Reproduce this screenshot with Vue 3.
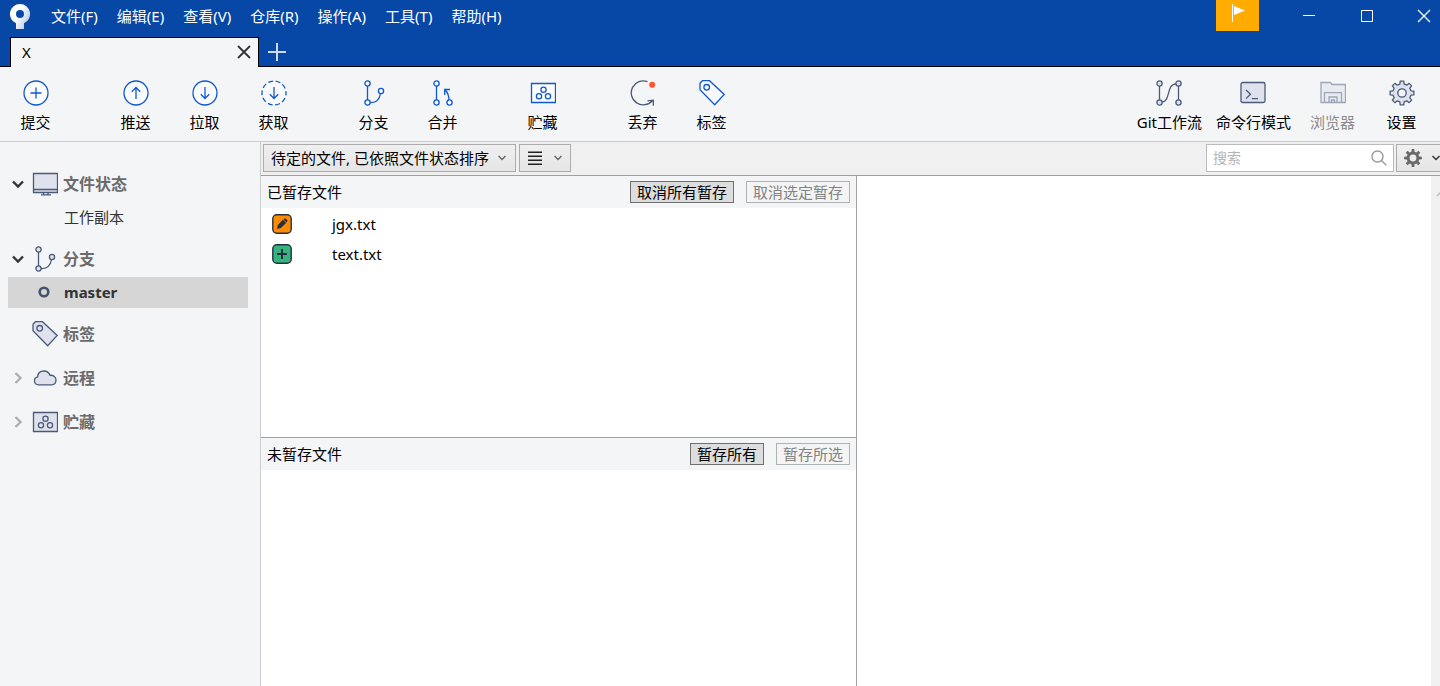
<script setup>
import { ref } from 'vue'

const menus = ['文件(F)', '编辑(E)', '查看(V)', '仓库(R)', '操作(A)', '工具(T)', '帮助(H)']

const actionGroups = [
  [{ icon: 'commit', label: '提交' }],
  [
    { icon: 'push', label: '推送' },
    { icon: 'pull', label: '拉取' },
    { icon: 'fetch', label: '获取' },
  ],
  [
    { icon: 'branch', label: '分支' },
    { icon: 'merge', label: '合并' },
  ],
  [{ icon: 'stash', label: '贮藏' }],
  [
    { icon: 'discard', label: '丢弃' },
    { icon: 'tag', label: '标签' },
  ],
]

const tools = [
  { icon: 'flow', label: 'Git工作流' },
  { icon: 'terminal', label: '命令行模式' },
  { icon: 'explorer', label: '浏览器', disabled: true },
  { icon: 'settings', label: '设置' },
]

const sections = [
  { icon: 'monitor', label: '文件状态', open: true, items: [{ label: '工作副本' }] },
  { icon: 'branch', label: '分支', open: true, items: [{ label: 'master', current: true }] },
  { icon: 'tag', label: '标签', leaf: true },
  { icon: 'cloud', label: '远程' },
  { icon: 'stash', label: '贮藏' },
]

const staged = [
  { name: 'jgx.txt', state: 'modified' },
  { name: 'text.txt', state: 'added' },
]

const query = ref('')

function gear(cx, cy, teeth, outer, inner) {
  const step = (Math.PI * 2) / teeth
  const at = (r, a) => `${(cx + r * Math.sin(a)).toFixed(2)} ${(cy - r * Math.cos(a)).toFixed(2)}`
  const points = []
  for (let i = 0; i < teeth; i++) {
    const a = i * step
    points.push(at(inner, a - step * 0.3), at(outer, a - step * 0.19), at(outer, a + step * 0.19), at(inner, a + step * 0.3))
  }
  return `M${points.join('L')}Z`
}
const gearLarge = gear(13, 13, 8, 12, 9.2)
const gearSmall = gear(9, 9, 8, 9, 6.4)
</script>

<template>
  <div class="app">
    <header class="titlebar">
      <div class="menubar">
        <svg class="logo" width="22" height="26" viewBox="0 0 22 26" aria-hidden="true">
          <defs>
            <linearGradient id="stem" x1="0" y1="0" x2="1" y2="0.6">
              <stop offset="0.5" stop-color="#fff" />
              <stop offset="1" stop-color="#b9cbe8" />
            </linearGradient>
          </defs>
          <path fill="url(#stem)" fill-rule="evenodd" d="M11 0a10 10 0 0 1 4 19.2V24.5a.6.6 0 0 1-.6.6H7.600a.6.600 0 0 1-.6-.6V19.200A10 10 0 0 1 11 0ZM11 6a4 4 0 1 0 0 8a4 4 0 0 0 0-8Z" />
        </svg>
        <nav class="menus">
          <button v-for="m in menus" :key="m" type="button">{{ m }}</button>
        </nav>
        <div class="window-controls">
          <button class="flag" type="button" aria-label="通知">
            <svg width="16" height="20" viewBox="0 0 16 20"><path d="M2.500 1v18" stroke="#fff" /><path d="M4 3l11 4.500L4 12z" fill="#fff" /></svg>
          </button>
          <button class="control" type="button" aria-label="最小化">
            <svg width="14" height="14" viewBox="0 0 14 14"><path d="M1 6.500h12" stroke="#fff" /></svg>
          </button>
          <button class="control" type="button" aria-label="最大化">
            <svg width="14" height="14" viewBox="0 0 14 14"><path d="M1.500 1.500h11v11h-11z" fill="none" stroke="#fff" /></svg>
          </button>
          <button class="control close" type="button" aria-label="关闭">
            <svg width="14" height="14" viewBox="0 0 14 14"><path d="M1 1l12 12M13 1L1 13" stroke="#fff" stroke-width="1.300" /></svg>
          </button>
        </div>
      </div>
      <div class="tabs">
        <div class="tab">
          <span>X</span>
          <button type="button" aria-label="关闭标签页">
            <svg width="14" height="14" viewBox="0 0 14 14"><path d="M1 1l12 12M13 1L1 13" stroke="#333" stroke-width="1.800" /></svg>
          </button>
        </div>
        <button class="add-tab" type="button" aria-label="新建标签页">
          <svg width="18" height="18" viewBox="0 0 18 18"><path d="M9 0v18M0 9h18" stroke="#cfdcf0" stroke-width="2" /></svg>
        </button>
      </div>
    </header>

    <svg class="symbols" aria-hidden="true">
      <symbol id="commit" viewBox="0 0 26 26"><circle class="fill" cx="13" cy="13" r="12" /><path d="M13 7.500v11M7.500 13h11" /></symbol>
      <symbol id="push" viewBox="0 0 26 26"><circle class="fill" cx="13" cy="13" r="12" /><path d="M13 19V7.500M8.800 11.700L13 7.500l4.200 4.200" /></symbol>
      <symbol id="pull" viewBox="0 0 26 26"><circle class="fill" cx="13" cy="13" r="12" /><path d="M13 7v11.500M8.800 14.300L13 18.500l4.200-4.200" /></symbol>
      <symbol id="fetch" viewBox="0 0 26 26"><circle class="fill" cx="13" cy="13" r="12" stroke-dasharray="5 2.540" stroke-dashoffset="2.500" /><path d="M13 7v11.500M8.800 14.300L13 18.500l4.200-4.200" /></symbol>
      <symbol id="branch" viewBox="0 0 26 26">
        <path d="M6.500 6v14M9 22.500c6 .5 9.500-3.500 10.500-9" />
        <circle class="fill" cx="6.500" cy="3.500" r="2.600" /><circle class="fill" cx="6.500" cy="22.500" r="2.600" /><circle class="fill" cx="20" cy="11" r="2.600" />
      </symbol>
      <symbol id="merge" viewBox="0 0 26 26">
        <path d="M6.500 6v14M19 20c0-4-1-7-4-10.500M14.700 15V9.500H20" />
        <circle class="fill" cx="6.500" cy="3.500" r="2.600" /><circle class="fill" cx="6.500" cy="22.500" r="2.600" /><circle class="fill" cx="19.500" cy="22.500" r="2.600" />
      </symbol>
      <symbol id="stash" viewBox="0 0 26 26">
        <path class="fill" d="M1.500 3.500h24v19h-24z" />
        <circle cx="13.500" cy="9.700" r="2.600" /><circle cx="9" cy="16.200" r="2.600" /><circle cx="18" cy="16.200" r="2.600" />
      </symbol>
      <symbol id="discard" viewBox="0 0 26 26">
        <path d="M17.500 1.600A12 12 0 1 0 22.500 20.500M17.500 20.800l5.800-.6v5.500" />
        <circle cx="22.200" cy="4.700" r="3" fill="#ff5630" stroke="none" />
      </symbol>
      <symbol id="tag" viewBox="0 0 26 26">
        <path class="fill" d="M1 3.200L3.500.7h7L25.200 14.500 15.700 24.800 1 9.800z" /><circle cx="7.700" cy="7.300" r="2.800" />
      </symbol>
      <symbol id="flow" viewBox="0 0 26 26">
        <path d="M3.500 6v14M22.500 6v14M6 22.200C15 21 10 4.500 20 3.800" />
        <circle class="fill" cx="3.500" cy="3.500" r="2.600" /><circle class="fill" cx="3.500" cy="22.500" r="2.600" />
        <circle class="fill" cx="22.500" cy="3.500" r="2.600" /><circle class="fill" cx="22.500" cy="22.500" r="2.600" />
      </symbol>
      <symbol id="terminal" viewBox="0 0 26 26">
        <rect class="fill" x="1" y="2.500" width="24" height="20" rx="1.800" /><path d="M6 10l4.500 4.300L6 18.600M11.800 18.600H18" />
      </symbol>
      <symbol id="explorer" viewBox="0 0 26 26">
        <path class="fill" d="M1 2.500h9.500L12 4.500h13.500v18H1z" /><path d="M4.500 22.500v-9.800h17v9.800M9 22.500V17h8v5.500M11.500 22v-2h3v2" />
      </symbol>
      <symbol id="settings" viewBox="0 0 26 26"><path class="fill" :d="gearLarge" stroke-linejoin="round" /><circle cx="13" cy="13" r="4.200" fill="#f4f5f7" /></symbol>
      <symbol id="monitor" viewBox="0 0 26 26">
        <path class="fill" d="M1.500 2.500h24v19h-24z" /><path d="M1.500 18.500h24M9 23.800h10M11.500 22v1.500M16 22v1.500" />
      </symbol>
      <symbol id="cloud" viewBox="0 0 26 26">
        <path class="fill" d="M6.500 19.800a4 4 0 0 1-.9-7.900c.2-3.700 2.900-5.900 6.400-5.900 3 0 5 1.500 6 4.300 3.500-.3 6 1.700 6 4.700 0 2.800-1.800 4.800-4.500 4.800z" />
      </symbol>
    </svg>

    <div class="toolbar">
      <div v-for="(group, i) in actionGroups" :key="i" class="group">
        <button v-for="a in group" :key="a.icon" type="button" class="tool">
          <svg class="icon" :class="a.icon === 'discard' ? 'slate' : 'blue'"><use :href="'#' + a.icon" /></svg>
          <span>{{ a.label }}</span>
        </button>
      </div>
      <div class="group right">
        <button v-for="t in tools" :key="t.icon" type="button" class="tool" :disabled="t.disabled">
          <svg class="icon slate"><use :href="'#' + t.icon" /></svg>
          <span>{{ t.label }}</span>
        </button>
      </div>
    </div>

    <div class="body">
      <aside class="sidebar">
        <section v-for="s in sections" :key="s.label">
          <button type="button" class="section-head">
            <svg class="caret" :class="{ open: s.open }" width="12" height="12" viewBox="0 0 12 12">
              <path v-if="!s.leaf" :d="s.open ? 'M1 3.500l5 5 5-5' : 'M3.500 1l5 5-5 5'" />
            </svg>
            <svg class="icon slate"><use :href="'#' + s.icon" /></svg>
            <span>{{ s.label }}</span>
          </button>
          <a v-for="item in s.items" :key="item.label" href="#" class="entry" :class="{ current: item.current }">
            <svg v-if="item.current" width="12" height="12" viewBox="0 0 12 12"><circle cx="6" cy="6" r="4.300" fill="none" stroke="#42526e" stroke-width="2.600" /></svg>
            <span>{{ item.label }}</span>
          </a>
        </section>
      </aside>

      <main class="main">
        <div class="filterbar">
          <div class="sort">
            <select aria-label="文件排序">
              <option>待定的文件, 已依照文件状态排序</option>
            </select>
            <svg class="chevron" width="8" height="6" viewBox="0 0 8 6"><path d="M.5 1L4 4.500 7.500 1" /></svg>
          </div>
          <button type="button" class="view" aria-label="列表视图">
            <svg width="14" height="14" viewBox="0 0 14 14"><path d="M0 1.300h14M0 5.300h14M0 9.300h14M0 13.300h14" stroke="#222" stroke-width="1.400" /></svg>
            <svg class="chevron" width="8" height="6" viewBox="0 0 8 6"><path d="M.5 1L4 4.500 7.500 1" /></svg>
          </button>
          <label class="search">
            <input v-model="query" type="text" placeholder="搜索" aria-label="搜索" />
            <svg width="16" height="16" viewBox="0 0 16 16"><circle cx="6.500" cy="6.500" r="5.500" /><path d="M10.500 10.500l4.800 4.800" /></svg>
          </label>
          <button type="button" class="options" aria-label="选项">
            <svg width="18" height="18" viewBox="0 0 18 18"><path :d="gearSmall" fill="#6a6a6a" /><circle cx="9" cy="9" r="3.400" fill="#ececec" /></svg>
            <svg class="chevron dark" width="8" height="6" viewBox="0 0 8 6"><path d="M.5 1L4 4.500 7.500 1" /></svg>
          </button>
        </div>

        <div class="panes">
          <div class="files">
            <section class="staged">
              <div class="pane-head">
                <h2>已暂存文件</h2>
                <button type="button">取消所有暂存</button>
                <button type="button" disabled>取消选定暂存</button>
              </div>
              <ul>
                <li v-for="f in staged" :key="f.name">
                  <svg width="20" height="20" viewBox="0 0 20 20">
                    <rect x=".8" y=".8" width="18.400" height="18.400" rx="4" :fill="f.state === 'added' ? '#36b37e' : '#ff8b00'" stroke="#253040" stroke-width="1.400" />
                    <path v-if="f.state === 'added'" d="M10 5v10M5 10h10" stroke="#253040" stroke-width="2" />
                    <g v-else fill="#253040"><path d="M5 15l.8-4.100 5.200-5.100 3.100 3.100-5.200 5.200z" /><path d="M11.500 5.400l.8-.7c1.200-1 3.900 1.600 2.900 2.800l-.8.900z" /></g>
                  </svg>
                  <span>{{ f.name }}</span>
                </li>
              </ul>
            </section>
            <section class="unstaged">
              <div class="pane-head">
                <h2>未暂存文件</h2>
                <button type="button">暂存所有</button>
                <button type="button" disabled>暂存所选</button>
              </div>
            </section>
          </div>
          <div class="diff">
            <div class="scroll"><svg width="9" height="8" viewBox="0 0 9 8"><path d="M6 6l4-4" fill="none" stroke="#bbb" stroke-width="1.500" /></svg></div>
          </div>
        </div>
      </main>
    </div>
  </div>
</template>

<style>
body {
  margin: 0;
  overflow: hidden;
}
</style>

<style scoped>
.app {
  display: flex;
  flex-direction: column;
  height: 100vh;
  background: #f4f5f7;
  color: #000;
  font: 15px/20px "Noto Sans", "Noto Sans CJK SC", sans-serif;
}
button {
  margin: 0;
  padding: 0;
  border: 0;
  background: none;
  color: inherit;
  font: inherit;
  white-space: nowrap;
}
svg {
  flex: none;
}
.symbols {
  position: absolute;
  width: 0;
  height: 0;
}

.titlebar {
  display: flex;
  flex-direction: column;
  flex: none;
  background: #0747a6;
  color: #fff;
}
.menubar {
  display: flex;
  align-items: flex-start;
  height: 37px;
}
.logo {
  margin: 4px 11px 0 9px;
}
.menus {
  display: flex;
  gap: 1px;
  height: 32px;
}
.menus button {
  padding: 0 9px;
}
.window-controls {
  display: flex;
  height: 32px;
  margin-left: auto;
}
.window-controls button {
  display: flex;
  align-items: center;
  justify-content: center;
}
.window-controls .flag {
  width: 43px;
  height: 31px;
  margin-right: 21px;
  padding-bottom: 5px;
  background: #ffab00;
}
.control {
  width: 58px;
}
.control.close {
  width: 32px;
  margin-left: 12px;
}
.tabs {
  display: flex;
  height: 30px;
  box-shadow: inset 0 -1px #000;
}
.tab {
  display: flex;
  align-items: center;
  justify-content: space-between;
  box-sizing: border-box;
  width: 249px;
  margin-left: 10px;
  padding: 0 7px 1px 11px;
  border: 1px solid #000;
  border-bottom: 0;
  background: #f4f5f7;
  color: #000;
}
.tab button,
.add-tab {
  display: flex;
  align-items: center;
}
.add-tab {
  margin-left: 9px;
}

.toolbar {
  display: flex;
  flex: none;
  gap: 31px;
  box-sizing: border-box;
  height: 75px;
  padding: 0 4px 0 1px;
  border-bottom: 1px solid #ccc;
}
.group {
  display: flex;
}
.group.right {
  margin-left: auto;
}
.tool {
  display: flex;
  flex-direction: column;
  align-items: center;
  gap: 6px;
  min-width: 69px;
  padding: 13px 7px 0;
}
.tool:disabled {
  color: #8c8c8c;
}
.tool:disabled .icon {
  opacity: 0.5;
}
.icon {
  width: 26px;
  height: 26px;
  overflow: visible;
  fill: none;
  stroke-width: 1.3;
}
.icon.blue {
  --tint: #fafbfd;
  stroke: #1058d0;
}
.icon.slate {
  --tint: #dfe2ec;
  stroke: #4a5a78;
}
.fill {
  fill: var(--tint);
}

.body {
  display: flex;
  flex: 1;
  min-height: 0;
}
.sidebar {
  flex: none;
  box-sizing: border-box;
  width: 261px;
  padding: 24px 12px 0 8px;
  border-right: 1px solid #ccc;
}
.sidebar section {
  margin-bottom: 8px;
}
.section-head {
  display: flex;
  align-items: center;
  width: 100%;
  height: 36px;
  padding-left: 4px;
  color: #6b6b6b;
  font-size: 16px;
  font-weight: 600;
}
.section-head .icon {
  margin: 0 5px 0 8px;
}
.caret {
  fill: none;
  stroke: #b0b0b0;
  stroke-width: 2.4;
}
.caret.open {
  stroke: #333;
}
.entry {
  display: flex;
  align-items: center;
  box-sizing: border-box;
  height: 31px;
  padding: 0 0 1px 56px;
  color: #333;
  text-decoration: none;
}
.entry.current {
  gap: 14px;
  padding-left: 30px;
  background: #d6d6d6;
  font-weight: 700;
}

.main {
  display: flex;
  flex: 1;
  flex-direction: column;
  min-width: 0;
}
.filterbar {
  display: flex;
  flex: none;
  box-sizing: border-box;
  height: 34px;
  padding: 2px 0 3px 2px;
  border-bottom: 1px solid #a0a0a0;
  background: #f0f0f0;
  overflow: hidden;
}
.sort {
  display: grid;
  align-items: center;
  width: 253px;
}
.sort > * {
  grid-area: 1 / 1;
}
.sort .chevron {
  justify-self: end;
  margin-right: 10px;
  pointer-events: none;
}
.sort select {
  appearance: none;
  width: 100%;
  height: 100%;
  margin: 0;
  padding: 0 24px 1px 7px;
  border-radius: 0;
  color: #000;
  font: inherit;
}
.sort select,
.view,
.options {
  box-sizing: border-box;
  border: 1px solid #acacac;
  background: linear-gradient(#f0f0f0, #e5e5e5);
}
.view,
.options {
  display: flex;
  align-items: center;
  justify-content: space-between;
}
.view {
  width: 52px;
  margin-left: 3px;
  padding: 0 8px;
}
.chevron {
  fill: none;
  stroke: #666;
  stroke-width: 1.5;
}
.chevron.dark {
  stroke: #333;
}
.search {
  display: flex;
  align-items: center;
  box-sizing: border-box;
  width: 188px;
  margin-left: auto;
  padding: 0 6px;
  border: 1px solid #bbb;
  background: #fff;
}
.search input {
  flex: 1;
  min-width: 0;
  padding: 0;
  border: 0;
  outline: 0;
  background: none;
  font: inherit;
  font-size: 14px;
}
.search input::placeholder {
  color: #b4b4b4;
}
.search svg {
  fill: none;
  stroke: #999;
  stroke-width: 1.4;
}
.options {
  width: 44px;
  margin-left: 2px;
  padding: 0 0 0 7px;
  border-right: 0;
}

.panes {
  display: flex;
  flex: 1;
  min-height: 0;
}
.files {
  display: flex;
  flex: 595 0 0;
  flex-direction: column;
  box-sizing: border-box;
  min-width: 0;
  border-right: 1px solid #a0a0a0;
  background: #fff;
}
.staged {
  flex: 262 0 0;
  box-sizing: border-box;
  border-bottom: 1px solid #a0a0a0;
}
.unstaged {
  flex: 248 0 0;
}
.pane-head {
  display: flex;
  align-items: center;
  height: 32px;
  padding: 0 6px;
  background: #f4f5f7;
}
.pane-head h2 {
  margin: 0 auto 0 0;
  font: inherit;
}
.pane-head button {
  margin-left: 12px;
  padding: 0 6px;
  border: 1px solid #707070;
  background: #ddd;
}
.pane-head button:disabled {
  border-color: #adb2b5;
  background: #f4f4f4;
  color: #838383;
}
ul {
  margin: 0;
  padding: 1px 11px 0;
  list-style: none;
}
li {
  display: flex;
  align-items: center;
  gap: 40px;
  height: 30px;
}
.diff {
  display: flex;
  flex: 583 0 0;
  justify-content: flex-end;
  min-width: 0;
  background: #fff;
}
.scroll {
  width: 9px;
  padding-top: 6px;
  background: #f0f0f0;
}
</style>
